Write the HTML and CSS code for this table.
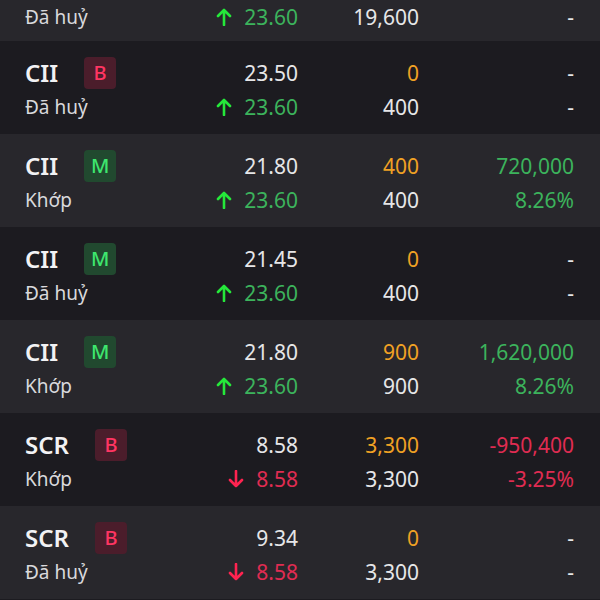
FILE: index.html
```html
<!DOCTYPE html>
<html lang="vi">
<head>
<meta charset="utf-8">
<link rel="stylesheet" href="styles.css">
</head>
<body>
<div class="list">
  <div class="row light partial">
    <div class="cell status">Đã huỷ</div>
    <div class="cell price up"><svg class="arr" viewBox="0 0 16 18"><path d="M8 17V2M2 8l6-6 6 6"/></svg>23.60</div>
    <div class="cell qty">19,600</div>
    <div class="cell val">-</div>
  </div>

  <div class="row dark">
    <div class="cell sym">CII<span class="badge b">B</span></div>
    <div class="cell price">23.50</div>
    <div class="cell qty orange">0</div>
    <div class="cell val">-</div>
    <div class="cell status">Đã huỷ</div>
    <div class="cell price up"><svg class="arr" viewBox="0 0 16 18"><path d="M8 17V2M2 8l6-6 6 6"/></svg>23.60</div>
    <div class="cell qty">400</div>
    <div class="cell val">-</div>
  </div>

  <div class="row light">
    <div class="cell sym">CII<span class="badge m">M</span></div>
    <div class="cell price">21.80</div>
    <div class="cell qty orange">400</div>
    <div class="cell val green">720,000</div>
    <div class="cell status">Khớp</div>
    <div class="cell price up"><svg class="arr" viewBox="0 0 16 18"><path d="M8 17V2M2 8l6-6 6 6"/></svg>23.60</div>
    <div class="cell qty">400</div>
    <div class="cell val green">8.26%</div>
  </div>

  <div class="row dark">
    <div class="cell sym">CII<span class="badge m">M</span></div>
    <div class="cell price">21.45</div>
    <div class="cell qty orange">0</div>
    <div class="cell val">-</div>
    <div class="cell status">Đã huỷ</div>
    <div class="cell price up"><svg class="arr" viewBox="0 0 16 18"><path d="M8 17V2M2 8l6-6 6 6"/></svg>23.60</div>
    <div class="cell qty">400</div>
    <div class="cell val">-</div>
  </div>

  <div class="row light">
    <div class="cell sym">CII<span class="badge m">M</span></div>
    <div class="cell price">21.80</div>
    <div class="cell qty orange">900</div>
    <div class="cell val green">1,620,000</div>
    <div class="cell status">Khớp</div>
    <div class="cell price up"><svg class="arr" viewBox="0 0 16 18"><path d="M8 17V2M2 8l6-6 6 6"/></svg>23.60</div>
    <div class="cell qty">900</div>
    <div class="cell val green">8.26%</div>
  </div>

  <div class="row dark">
    <div class="cell sym">SCR<span class="badge b">B</span></div>
    <div class="cell price">8.58</div>
    <div class="cell qty orange">3,300</div>
    <div class="cell val red">-950,400</div>
    <div class="cell status">Khớp</div>
    <div class="cell price down"><svg class="arr" viewBox="0 0 16 18"><path d="M8 1v15M2 10l6 6 6-6"/></svg>8.58</div>
    <div class="cell qty">3,300</div>
    <div class="cell val red">-3.25%</div>
  </div>

  <div class="row light">
    <div class="cell sym">SCR<span class="badge b">B</span></div>
    <div class="cell price">9.34</div>
    <div class="cell qty orange">0</div>
    <div class="cell val">-</div>
    <div class="cell status">Đã huỷ</div>
    <div class="cell price down"><svg class="arr" viewBox="0 0 16 18"><path d="M8 1v15M2 10l6 6 6-6"/></svg>8.58</div>
    <div class="cell qty">3,300</div>
    <div class="cell val">-</div>
  </div>
</div>
</body>
</html>
```

FILE: styles.css
```css
html, body {
  margin: 0;
  padding: 0;
  background: #1c1b20;
}
body {
  width: 600px;
  height: 600px;
  overflow: hidden;
  font-family: "Noto Sans", "Open Sans", sans-serif;
  color: #e6e6e8;
}
.list {
  display: flex;
  flex-direction: column;
}
.row {
  box-sizing: border-box;
  height: 93px;
  padding: 15px 26px 0 25px;
  display: grid;
  grid-template-columns: 1fr 110px 121px 155px;
  grid-auto-rows: 34px;
  align-items: center;
}
.row.partial {
  height: 41px;
  padding-top: 0;
}
.light { background: #28272c; }
.dark { background: #1c1b20; }
.cell {
  font-size: 21px;
  white-space: nowrap;
  line-height: 34px;
}
.sym {
  display: flex;
  align-items: center;
  font-size: 24px;
  font-weight: 600;
  color: #f2f2f4;
}
.status {
  font-size: 19px;
  color: #d9d9dc;
}
.price, .qty, .val {
  text-align: right;
}
.price {
  display: flex;
  justify-content: flex-end;
  align-items: center;
}
.badge {
  display: inline-flex;
  align-items: center;
  justify-content: center;
  width: 32px;
  height: 32px;
  margin-left: 26px;
  border-radius: 4px;
  font-size: 20px;
  font-weight: 500;
}
.badge.b {
  background: #4b1d2b;
  color: #ff3562;
}
.badge.m {
  background: #21492f;
  color: #3ee66e;
}
.arr {
  width: 16px;
  height: 18px;
  margin-right: 12px;
  fill: none;
  stroke-width: 2.6;
  stroke-linecap: round;
  stroke-linejoin: round;
}
.up { color: #3cb35c; }
.up .arr { stroke: #25e83a; }
.down { color: #e02c52; }
.down .arr { stroke: #ff2350; }
.orange { color: #f0a124; }
.green { color: #3cb35c; }
.red { color: #e02c52; }
```
